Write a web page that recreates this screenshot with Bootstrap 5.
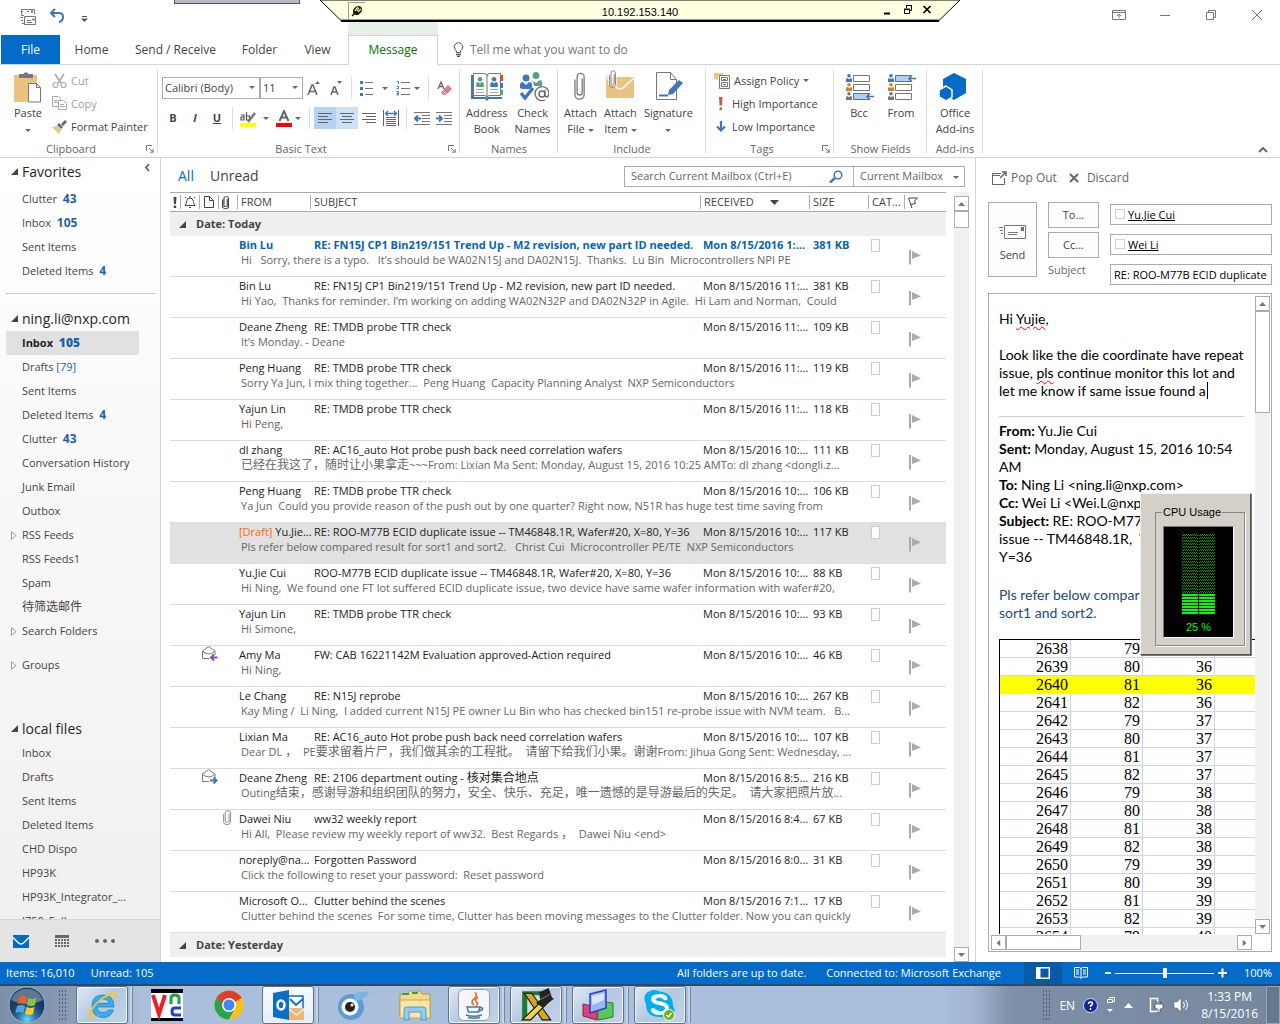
<!DOCTYPE html>
<html lang="en">
<head>
<meta charset="utf-8">
<meta name="viewport" content="width=device-width, initial-scale=1">
<title>Inbox - Outlook</title>
<link href="https://cdn.jsdelivr.net/npm/bootstrap@5.3.0/dist/css/bootstrap.min.css" rel="stylesheet">
<style>
body{font-family:"Open Sans","Noto Sans CJK SC",sans-serif;font-size:11px;line-height:16px;color:#444;height:100vh;min-height:760px;background:#fff}
button,input,select{font:inherit;color:inherit}
button{background:none;border:0;padding:0}
svg{display:block;flex:none}
a{color:inherit;text-decoration:none}
.crt{display:inline-block;width:0;height:0;border:3px solid transparent;border-top-color:#666;border-bottom:0;vertical-align:middle;flex:none}
.han{font-size:12px}
/* title bar */
.titlebar{height:35px}
.qat{gap:12px;padding:8px 0 0 20px}
.peek{left:174px;width:126px;height:4px;background:#b4bac6;border:1px solid #555;border-top:0}
.rdp{left:25%;width:50%;height:22px;z-index:5;color:#000;font-family:"Liberation Sans",sans-serif}
.rdp .side-cell{width:100px}
.ctxtab{left:348px;width:90px;top:20px;height:15px;background:#e8efe8}
.winbtns{gap:32px;padding:9px 16px 0 0}
/* tabs */
.tabsrow{height:30px;font-size:12px;border-bottom:1px solid #d4d4d4}
.tabsrow a{line-height:29px;text-align:center}
.t-file{width:59px;margin-left:1px;background:#046bc9;color:#fff}
.t-home{width:63px}.t-send{width:105px}.t-folder{width:63px}.t-view{width:53px}
.tabsrow .t-msg{width:90px;margin-left:4px;height:30px;border:1px solid #d4d4d4;border-bottom:0;background:#fff;color:#007000;line-height:27px}
.tell{color:#777;gap:6px;padding-left:15px}
/* ribbon */
.ribbon{height:93px;border-bottom:1px solid #d4d4d4}
.grp{position:relative;padding-top:4px}
.grp::after{content:"";position:absolute;right:0;top:4px;bottom:4px;width:1px;background:#dcdcdc}
.grp .cap{position:absolute;left:0;right:0;bottom:0;text-align:center;color:#666}
.launch{position:absolute;right:4px;bottom:4px}
.bigb{line-height:16px;text-align:center;display:flex;flex-direction:column;align-items:center}
.bigb svg{margin-bottom:2px}
.smallb{height:23px;display:flex;align-items:center;gap:4px;white-space:nowrap}
.g1{width:158px}.g2{width:302px}.g3{width:98px;padding-left:6px;gap:7px}.g4{width:148px;padding-left:6px;gap:7px}.g5{width:128px}.g6{width:93px}.g7{width:56px}
.dim{color:#a0a0a0}
.cell{width:22px;height:22px;display:flex;align-items:center;justify-content:center;flex:none}
.al1{background:#b5d3f0}.al2{background:#cde2f8}
.vsep{width:1px;height:22px;background:#dcdcdc;flex:none}
.pick{appearance:none;border:1px solid #ababab;border-radius:0;height:22px;width:100%;padding:0 2px;background:#fff}
.pickw{position:relative;flex:none}.pickw .crt{position:absolute;right:5px;top:9px;pointer-events:none}
.pk1{width:98px}.pk2{width:43px}
/* folders */
.side{width:161px;border-right:1px solid #d4d4d4;background:linear-gradient(#fff,#efefef)}
.flist{padding-top:2px;min-height:0}
.side h2{font-size:14px;line-height:24px;font-weight:400;margin:0;padding-left:22px;color:#262626;position:relative}
.side h2.top{margin-bottom:3px}
.side h2 svg,.fold svg{position:absolute;left:11px;top:8px}
.fold{display:block;height:24px;line-height:24px;padding-left:22px;position:relative;white-space:nowrap}
.fold b{color:#1e62ab;font-size:12px;margin-left:3px}.fold i{font-style:normal;color:#1e62ab}
.fold.on{background:#e1e1e1;margin:0 21px 0 6px;padding-left:16px;font-weight:700;color:#222}
.side hr{margin:10px 4px 13px 6px;opacity:1;border-color:#c8c8c8}
.sp1{height:10px}.sp2{height:40px}
.navbot{height:43px;background:#e4e4e4;border-top:1px solid #d4d4d4;gap:26px;padding-left:13px}
/* list */
.listp{padding:0 6px 0 9px}
.lhead{height:34px;padding-top:2px}
.big-t{font-size:14px}
.sbox{width:341px;height:21px;border:1px solid #ababab;color:#666}
.sbox input{border:0;outline:0;width:204px;padding:0 6px;background:none}
.sbox input::placeholder{color:#666;opacity:1}
.sbox select{appearance:none;border:0;border-left:1px solid #ababab;height:19px;width:111px;padding:0 6px;background:none}
.mail{width:100%;table-layout:fixed;border-collapse:separate;border-spacing:0}
.mail td,.mail th{padding:0;white-space:pre;overflow:hidden;vertical-align:top}
.mail thead th{height:20px;line-height:18px;font-weight:400;border-top:1px solid #ababab;border-bottom:1px solid #ababab}
.mail thead th>span{display:flex;align-items:center;height:14px;margin:2px 0;padding-left:3px;border-left:1px solid #ababab;line-height:14px}
.mail thead th:first-child>span{border:0}
.grph td{background:#efefef;height:24px;line-height:24px;font-weight:700}
.grph svg{display:inline-block;margin:0 10px 0 9px;vertical-align:0}
.m1 td{height:17px;line-height:17px;color:#222}
.mail .m1 td.f{padding-left:2px;overflow:visible}.m1 td.s{padding-left:4px}.m1 td.r{padding-left:3px}.m1 td.z{padding-left:4px}
.mail .m1 td.env{overflow:visible;padding-left:3px}.mail .m1 td.att{padding-left:5px}
.m2 td{height:24px;line-height:14px;color:#666;border-bottom:1px solid #dcdcdc;padding-left:4px}
.m1 td.ln{border-bottom:1px solid #dcdcdc}
.ln svg{margin:14px 0 0 5px}
.new .m1 td{color:#0564b4;font-weight:700}
.sel td{background:#e1e1e1}
.cbx{width:9px;height:13px;border:1px solid #ccc;margin:3px 0 0 3px;background:#fff}
.dr{color:#ff6a00}
.sbar{width:15px;background:#f1f1f1}
.sbtn{width:15px;height:15px;border:1px solid #ababab;background:#fff;display:flex;align-items:center;justify-content:center;flex:none}
.thumb{border:1px solid #ababab;background:#fff}
.th1{height:17px}.th2{height:102px}.th3{width:75px}
.dn{transform:rotate(180deg)}.lf{transform:rotate(-90deg)}.rt{transform:rotate(90deg)}
.minh{min-height:0}
/* compose */
.comp{width:305px;border-left:1px solid #d4d4d4;padding:10px 8px 10px 12px}
.cbar{height:20px;font-size:12px;color:#666}
.addr{height:83px;gap:11px;margin:14px 0 8px}
.fbtn{border:1px solid #ababab;background:#fdfdfd}
.fsend{width:49px;height:75px}
.fcol{width:51px;gap:4px}.fcol .fbtn{height:26px}.fcol label{color:#666}
.fflds{gap:9px;padding-top:2px;min-width:0}
.fld{height:21px;border:1px solid #ababab;color:#000;overflow:hidden}
.fld input{border:0;outline:0;padding:0 3px;width:100%;min-width:0;line-height:19px;background:none}
.nm input{text-decoration:underline}
.pres{width:10px;height:10px;border:1px solid #d0d0d0;margin:4px 0 0 4px;flex:none}
.msgbox{border:1px solid #ababab;color:#000;padding:2px 1px 1px 2px;min-height:0}
.doc{font-family:Lato,"Liberation Sans",sans-serif;font-size:14px;line-height:18px;padding:14px 0 0 8px;white-space:nowrap}
.doc p{margin:0}
.doc hr{margin:16px 11px 5px 0;opacity:1;border-color:#ccc}
.caretbar{border-left:1px solid #000;margin-left:1px}
.wavy{text-decoration:underline wavy #f00 1px;text-underline-offset:2px}
.doc .ink{color:#1f497d;margin:20px 0 17px}
.dat{table-layout:fixed;width:300px;border-collapse:separate;border-spacing:0;border-top:1px solid #000;border-left:1px solid #000;font-family:"Liberation Serif",serif;font-size:16px;line-height:17px}
.dat td{padding:0 2px 0 0;height:18px;text-align:right;border-right:1px solid #cdd7e2;border-bottom:1px solid #cdd7e2}
.dat .hl td{background:#ff0;border-color:#ff0}
.hbar{background:#f1f1f1;margin:1px 18px 0 0}
.cpu{right:29px;bottom:369px;width:111px;height:162px;z-index:6;background:#d4d0c8;border:1px solid;border-color:#f4f2ee #555 #555 #f4f2ee;box-shadow:1px 1px 0 #777;padding:18px 5px 8px 14px;font-family:"Liberation Sans",sans-serif;color:#000}
.cpu fieldset{border:1px solid #888;box-shadow:1px 1px 0 #fff;height:134px;position:relative;padding:13px 10px 8px 7px}
.cpu legend{position:absolute;top:-8px;left:6px;float:none;width:auto;font-size:11px;line-height:14px;background:#d4d0c8;padding:0 1px;margin:0;white-space:nowrap}
.scr{background:#000;height:112px;color:#0f0;text-align:center;border:1px solid;border-color:#777 #fff #fff #777;padding-top:7px}
.scr svg{margin:0 auto 5px}
/* status + taskbar */
.status{height:22px;background:#046bc9;color:#fff;line-height:22px;padding:0 8px 0 6px}
.conn{padding:0 23px 0 20px}
.vbtn{width:38px;height:22px;display:flex;align-items:center;justify-content:center}
.vbtn.on{background:#075ba8}
.task{height:40px;border-top:2px solid #3a4654;background:linear-gradient(90deg,#7d90a8 0,#8598b0 60px,#a9bfdc 140px,#a9bfdc 73%,#a2b6d1 76%,#7d90a8 79%,#75889f 100%)}
.slot{width:62px;height:38px;display:flex;align-items:center;padding-left:9px;position:relative}
.slot.run{background:linear-gradient(135deg,#dfe9f5,#b4c8e0 50%,#c2d3e8);border:1px solid #5d7189;border-radius:3px;box-shadow:inset 0 0 0 1px #ecf3fa}
.slot.stk{width:52px;margin-right:10px}
.slot.stk::after{content:"";position:absolute;left:100%;top:0;bottom:0;width:6px;border:solid #7488a1;border-width:0 1px 0 0;box-shadow:inset -2px 0 0 #c4d4e8}
.slot.act{background:linear-gradient(#f7fafd,#e3edf8)}
.grip{width:9px;height:32px;background-image:radial-gradient(#4c5d72 1px,transparent 1px);background-size:3px 4px}
.gstart{margin:0 9px 0 12px}
.tray{color:#fff;font-size:12px;line-height:17px}
.clock{margin:0 8px 0 11px;text-align:center}
.desk{width:14px;background:#66788e;border:1px solid #93a5ba}
</style>
<script src="https://cdn.jsdelivr.net/npm/bootstrap@5.3.0/dist/js/bootstrap.bundle.min.js"></script>
</head>
<body class="d-flex flex-column overflow-hidden position-relative m-0">
<svg width="0" height="0" class="position-absolute">
<symbol id="tri" viewBox="0 0 7 7"><path d="M7 0v7H0z" fill="#444"/></symbol>
<symbol id="tro" viewBox="0 0 6 9"><path d="M.5.8v7.4l4.600-3.700z" fill="#fff" stroke="#999"/></symbol>
<symbol id="lau" viewBox="0 0 8 8"><path d="M.5 6V.5H6M3 3l4 4M7.200 4v3.200H4" fill="none" stroke="#777"/></symbol>
<symbol id="clip" viewBox="0 0 10 26"><path d="M7.500 6v13a2.300 2.300 0 0 1-4.700 0V4.500a3.200 3.200 0 0 1 6.500 0V21a4.200 4.200 0 0 1-8.500 0V7" fill="none" stroke="#777" stroke-width="1.200"/></symbol>
<symbol id="pers" viewBox="0 0 6 8"><circle cx="3" cy="1.800" r="1.800"/><path d="M0 8V5.500Q0 4 1.500 4L3 5.200 4.500 4Q6 4 6 5.500V8z"/></symbol>
<symbol id="flag" viewBox="0 0 12 15"><path d="M1 0v14.500" stroke="#aaa" stroke-width="2"/><path d="M3 1l9 4.500L3 9z" fill="#aaa"/></symbol>
<symbol id="cu" viewBox="0 0 7 4"><path d="M0 4L3.500 0 7 4z" fill="#777"/></symbol>
</svg>

<header class="titlebar d-flex justify-content-between position-relative flex-shrink-0">
  <div class="qat d-flex align-items-start">
    <button aria-label="Send and receive"><svg width="17" height="17" viewBox="0 0 17 17" fill="none" stroke="#777"><path d="M4 7.500H1.500v-6h13V6M1 3.500h2M0 9.500h3M1 12.500h2M2 15.500h2M7 3.500h2"/><path d="M4.500 8.500h11v8h-11zM7 12.500h4M7 14.500h5"/><path d="M11 3.500h2M12.500 11.500h2" stroke="#2a6db5" stroke-width="2"/></svg></button>
    <button aria-label="Undo"><svg width="16" height="15" viewBox="0 0 16 15" fill="none" stroke="#3e78b8" stroke-width="2"><path d="M6 1L2 5l4 4M2.500 5H10q4 0 4 4 0 4-4 5"/></svg></button>
    <button aria-label="Customize" class="pt-1 ms-1 mt-1"><svg width="7" height="6" viewBox="0 0 7 6"><path d="M1 .5h5" stroke="#555"/><path d="M0 2.500h7L3.500 6z" fill="#555"/></svg></button>
  </div>
  <div class="peek position-absolute top-0"></div>
  <div class="ctxtab position-absolute"></div>
  <div class="rdp position-absolute top-0">
    <svg class="position-absolute w-100 h-100" viewBox="0 0 640 22" preserveAspectRatio="none"><path d="M0 0l21 20.500h598L640 0z" fill="#ffffe1" stroke="#000"/><path d="M21 19.500h598" stroke="#999"/><path d="M21 21h598" stroke="#000" stroke-width="2"/></svg>
    <div class="position-relative d-flex justify-content-between align-items-center">
      <button aria-label="Pin" class="side-cell ps-4"><svg class="ms-1" width="17" height="17" viewBox="0 0 17 17"><path d="M.5 17V.5H17" fill="none" stroke="#999"/><path d="M4 14l3-3" stroke="#111" stroke-width="1.500"/><ellipse cx="9.500" cy="8.500" rx="5" ry="4" transform="rotate(-45 9.500 8.500)" fill="#111"/><path d="M7 9l3-4M10 10l3-3" stroke="#ee3" stroke-width="1.500"/><path d="M9 9l2-3" stroke="#fff"/></svg></button>
      <span class="pt-1">10.192.153.140</span>
      <span class="side-cell d-flex align-items-center justify-content-end gap-2 pe-4">
        <svg width="12" height="12" viewBox="0 0 12 12"><path d="M2 9.500h6" stroke="#000" stroke-width="2"/></svg>
        <svg width="12" height="12" viewBox="0 0 12 12" fill="none" stroke="#000"><path d="M4.500 4V1.500h5v5H8M4 1.500h6M2.500 5.500h5v4h-5zM2 5h6"/></svg>
        <svg class="me-1" width="10" height="12" viewBox="0 0 10 12"><path d="M1.500 2l7 7M8.500 2l-7 7" stroke="#000" stroke-width="1.700"/></svg>
      </span>
    </div>
  </div>
  <div class="winbtns d-flex align-items-start">
    <button aria-label="Ribbon options"><svg width="14" height="12" viewBox="0 0 14 12" fill="none" stroke="#777"><path d="M.5 1.500h13v9H.5zM.5 3.500h13M7 9V5M5 7l2-2 2 2"/></svg></button>
    <button aria-label="Minimize"><svg width="14" height="12" viewBox="0 0 14 12"><path d="M2 6.500h10" stroke="#777"/></svg></button>
    <button aria-label="Restore"><svg width="14" height="12" viewBox="0 0 14 12" fill="none" stroke="#777"><path d="M2.500 3.500h7v7h-7zM4.500 3V1.500h7v7H10"/></svg></button>
    <button aria-label="Close"><svg width="14" height="12" viewBox="0 0 14 12"><path d="M2 1l10 10M12 1L2 11" stroke="#777"/></svg></button>
  </div>
</header>

<nav class="tabsrow d-flex flex-shrink-0">
  <a href="#" class="t-file">File</a><a href="#" class="t-home">Home</a><a href="#" class="t-send">Send / Receive</a><a href="#" class="t-folder">Folder</a><a href="#" class="t-view">View</a><a href="#" class="t-msg">Message</a>
  <label class="tell d-flex align-items-center"><svg width="11" height="15" viewBox="0 0 11 15" fill="none" stroke="#555"><path d="M3.500 10.500Q3.500 8.500 2 7.200A4.200 4.200 0 1 1 9 7.200Q7.500 8.500 7.500 10.500z"/><path d="M3 12.500h5M4 14.500h3" stroke-width="1.400"/></svg>Tell me what you want to do</label>
</nav>

<section class="ribbon d-flex flex-shrink-0 position-relative">
  <div class="grp g1 d-flex">
    <button class="bigb ps-2 pe-2 ms-1"><svg width="32" height="34" viewBox="0 0 32 34"><path d="M2 6h23v27H2z" fill="#eac282"/><path d="M7 9V5h4.500a2.700 2.700 0 0 1 5 0H21v4z" fill="#777"/><path d="M16.500 14.500h8l4 4V33h-12z" fill="#fff" stroke="#777"/><path d="M24.500 14.500v4h4" fill="none" stroke="#777"/></svg><span>Paste</span><i class="crt mt-2"></i></button>
    <div>
      <button class="smallb dim"><svg width="15" height="16" viewBox="0 0 15 16" fill="none" stroke="#aaa" stroke-width="1.600"><path d="M3 1l6 9M12 1L6 10"/><circle cx="3.500" cy="12" r="2.500" stroke-width="1.200"/><circle cx="11.500" cy="12" r="2.500" stroke-width="1.200"/></svg>Cut</button>
      <button class="smallb dim"><svg width="15" height="15" viewBox="0 0 15 15" fill="#fff" stroke="#aaa"><path d="M.5.5h6l2 2v8h-8zM2 4.500h4M2 6.500h4"/><path d="M6.500 4.500h5l3 3v6h-8zM8 8.500h4M8 10.500h5"/></svg>Copy</button>
      <button class="smallb"><svg width="15" height="15" viewBox="0 0 15 15"><path d="M0 8l5-1 4 4-2 4z" fill="#eac282"/><path d="M5 6l4 4 2-2-4-4zM9 5l4-4 2 2-4 4z" fill="#666"/></svg>Format Painter</button>
    </div>
    <div class="cap pe-3">Clipboard</div><svg class="launch" width="8" height="8"><use href="#lau"/></svg>
  </div>

  <div class="grp g2 ps-1">
    <div class="d-flex align-items-center pt-2">
      <div class="pickw pk1"><select class="pick" aria-label="Font"><option>Calibri (Body)</option></select><i class="crt"></i></div>
      <div class="pickw pk2"><select class="pick" aria-label="Font size"><option>11</option></select><i class="crt"></i></div>
      <button class="cell" aria-label="Grow font"><svg width="14" height="16" viewBox="0 0 14 16"><path d="M1 15L5 5h1l4 10M2.500 11.500h6" fill="none" stroke="#666" stroke-width="1.600"/><path d="M8 4h5l-2.500-3z" fill="#3e78b8"/></svg></button>
      <button class="cell" aria-label="Shrink font"><svg width="14" height="16" viewBox="0 0 14 16"><path d="M2 15l3-8h1l3 8M3 12h5" fill="none" stroke="#666" stroke-width="1.500"/><path d="M8 1h5l-2.500 3z" fill="#3e78b8"/></svg></button>
      <span class="vsep ms-1 me-1"></span>
      <button class="cell" aria-label="Bullets"><svg width="14" height="15" viewBox="0 0 14 15"><path d="M0 1.500h3M0 7.500h3M0 13.500h3" stroke="#3e78b8" stroke-width="3"/><path d="M5 1.500h8M5 7.500h8M5 13.500h8" stroke="#777"/></svg></button><i class="crt ms-1 me-1"></i>
      <button class="cell" aria-label="Numbering"><svg width="15" height="15" viewBox="0 0 15 15"><path d="M1 .5h1.500V3M.5 5.500h2v2h-2M.5 10.500h2v3.500h-2M.5 12.500h2" stroke="#3e78b8" fill="none"/><path d="M5 1.500h9M5 7.500h9M5 13.500h9" stroke="#777"/></svg></button><i class="crt me-2"></i>
      <span class="vsep me-1"></span>
      <button class="cell" aria-label="Clear formatting"><svg width="15" height="15" viewBox="0 0 15 15"><path d="M1 8l3-7 3 7M2 5.500h4" stroke="#666" fill="none" stroke-width="1.300"/><path d="M4 11l7-7 4 4-6 6H6z" fill="#e2788e"/><path d="M5 9l5 5" stroke="#fff"/></svg></button>
    </div>
    <div class="d-flex align-items-center mt-2">
      <button class="cell fw-bold">B</button><button class="cell fst-italic fw-bold">I</button><button class="cell fw-bold text-decoration-underline">U</button>
      <span class="vsep ms-1 me-1"></span>
      <button class="cell" aria-label="Highlight"><svg width="17" height="17" viewBox="0 0 17 17"><path d="M1 5h3v5H1V7h3M6.500 2v8h3V6h-3" fill="none" stroke="#555" stroke-width="1.200"/><path d="M8 12l7-9" stroke="#777" stroke-width="2.500"/><path d="M0 13h16v4H0z" fill="#ff0"/></svg></button><i class="crt ms-1 me-1"></i>
      <button class="cell" aria-label="Font color"><svg width="17" height="17" viewBox="0 0 17 17"><path d="M3.500 11L8 1l4.500 10M5 7.500h6" fill="none" stroke="#666" stroke-width="2"/><path d="M0 13h16v4H0z" fill="red"/></svg></button><i class="crt"></i>
      <span class="vsep ms-2 me-1"></span>
      <button class="cell al1" aria-label="Align left"><svg width="14" height="11" viewBox="0 0 14 11"><path d="M0 .5h14M0 3.500h10M0 6.500h14M0 9.500h10" stroke="#666"/></svg></button>
      <button class="cell al2" aria-label="Center"><svg width="14" height="11" viewBox="0 0 14 11"><path d="M0 .5h14M2 3.500h10M0 6.500h14M2 9.500h10" stroke="#666"/></svg></button>
      <button class="cell" aria-label="Align right"><svg width="14" height="11" viewBox="0 0 14 11"><path d="M0 .5h14M4 3.500h10M0 6.500h14M4 9.500h10" stroke="#666"/></svg></button>
      <button class="cell" aria-label="Justify"><svg width="16" height="16" viewBox="0 0 16 16"><path d="M.5 0v16M15.500 0v16M3 7.500h10M3 9.500h10M3 11.500h10M3 13.500h10M3 15.500h10" stroke="#666"/><path d="M2 3.500h12M5 1L2.500 3.500 5 6M11 1l2.500 2.500L11 6" stroke="#3e78b8" stroke-width="1.400" fill="none"/></svg></button>
      <span class="vsep ms-1 me-1"></span>
      <button class="cell" aria-label="Decrease indent"><svg width="16" height="13" viewBox="0 0 16 13"><path d="M0 .5h16M8 3.500h8M8 6.500h8M8 9.500h8M0 12.500h16" stroke="#777"/><path d="M1 6.500h6M4 3.500l-3 3 3 3" stroke="#3e78b8" stroke-width="2" fill="none"/></svg></button>
      <button class="cell" aria-label="Increase indent"><svg width="16" height="13" viewBox="0 0 16 13"><path d="M0 .5h16M8 3.500h8M8 6.500h8M8 9.500h8M0 12.500h16" stroke="#777"/><path d="M0 6.500h6M3 3.500l3 3-3 3" stroke="#3e78b8" stroke-width="2" fill="none"/></svg></button>
    </div>
    <div class="cap pe-3">Basic Text</div><svg class="launch" width="8" height="8"><use href="#lau"/></svg>
  </div>

  <div class="grp g3 d-flex">
    <button class="bigb"><svg width="32" height="34" viewBox="0 0 32 34"><path d="M0 6h3v22h12l1 1 1-1h14v2H18l-2 2-2-2H0z" fill="#3e78b8"/><path d="M2.500 4.500H13q3 0 3 2.500 0-2.500 3-2.500h10.500v22H19q-3 0-3 2-0-2-3-2H2.500zM16 7v20" fill="#fff" stroke="#777"/><path d="M29 6h3v6h-3z" fill="#d9532c"/><path d="M29 14h3v5h-3z" fill="#3e78b8"/><path d="M29 21h3v5h-3z" fill="#5a9f85"/><path d="M5 20.500h8M5 23.500h8M19 20.500h8M19 23.500h8" stroke="#aaa"/><use href="#pers" x="5" y="8" width="8" height="10" fill="#5a9f85"/><use href="#pers" x="19" y="8" width="8" height="10" fill="#3e78b8"/></svg>Address<br>Book</button>
    <button class="bigb"><svg width="32" height="34" viewBox="0 0 32 34"><circle cx="9" cy="9" r="3.500" fill="#3e78b8"/><path d="M3 19v-3q0-3 3-3l3 3 3-3q3 0 3 3v2l-2 2H5z" fill="#3e78b8"/><circle cx="19" cy="6.500" r="3.500" fill="#5a9f85"/><path d="M14 11l5 3 4-3q2 0 2 3v3h-8l-1-4z" fill="#5a9f85"/><path d="M4 24l4 5 8-10" fill="none" stroke="#3e78b8" stroke-width="3.500"/><circle cx="25" cy="25" r="3" fill="none" stroke="#666" stroke-width="1.400"/><path d="M28 21v5q0 2 2 2 2-1 2-4a7 7 0 1 0-4 7" fill="none" stroke="#666" stroke-width="1.300"/></svg>Check<br>Names</button>
    <div class="cap">Names</div>
  </div>

  <div class="grp g4 d-flex">
    <button class="bigb"><svg width="32" height="34" viewBox="0 0 32 34"><use href="#clip" x="10" y="3" width="11" height="28"/></svg>Attach<br><span>File <i class="crt"></i></span></button>
    <button class="bigb"><svg width="32" height="34" viewBox="0 0 32 34"><path d="M2 8h28v21H2z" fill="#eac282"/><path d="M3 9l9 9q4 4 8 0l10-9" fill="none" stroke="#fff" stroke-width="1.500"/><path d="M4 2h9v14H4z" fill="#fff" opacity=".6"/><use href="#clip" x="5" y="1" width="7" height="18"/></svg>Attach<br><span>Item <i class="crt"></i></span></button>
    <button class="bigb"><svg width="32" height="34" viewBox="0 0 32 34"><path d="M4.500 3.500h14l6 7v20h-20zM18.500 3.500v7h6" fill="#fff" stroke="#777"/><path d="M7 26.500h9" stroke="#3e78b8" stroke-width="2"/><path d="M16 26l1-5L27 11l4 3-10 11z" fill="#3e78b8"/></svg>Signature<i class="crt mt-2"></i></button>
    <div class="cap">Include</div>
  </div>

  <div class="grp g5 ps-2">
    <button class="smallb"><svg width="16" height="16" viewBox="0 0 16 16"><path d="M0 0h9v3H4v4L0 6z" fill="#eac282"/><path d="M5.500 2.500h10v13h-10zM7.500 4.500h6v3h-6zM7.500 9.500h6v4h-6zM9 6.500h3M9 11.500h3" fill="#fff" stroke="#777"/></svg>Assign Policy <i class="crt"></i></button>
    <button class="smallb"><svg width="14" height="14" viewBox="0 0 14 14"><path d="M5 0h3.500L8 8.500H5.500zM5.500 10.500H8V13H5.500z" fill="#d9532c"/></svg>High Importance</button>
    <button class="smallb"><svg width="14" height="14" viewBox="0 0 14 14"><path d="M7 1v10M3 6.500l4 4 4-4" stroke="#3e78b8" stroke-width="2.200" fill="none"/></svg>Low Importance</button>
    <div class="cap pe-3">Tags</div><svg class="launch" width="8" height="8"><use href="#lau"/></svg>
  </div>

  <div class="grp g6 d-flex ps-2 gap-2">
    <button class="bigb"><svg width="34" height="34" viewBox="0 0 34 34"><use href="#pers" x="4" y="5" width="6" height="8" fill="#3e78b8"/><use href="#pers" x="4" y="14" width="6" height="8" fill="#e07b20"/><use href="#pers" x="4" y="23" width="6" height="8" fill="#777"/><path d="M11.500 6.500h16v6h-16zM11.500 15.500h16v6h-16z" fill="#fff" stroke="#777"/><path d="M27 24.500H11.500v6H27" fill="#b9cce4" stroke="#3e78b8"/><path d="M25 27.500h7M28 24.500l-3 3 3 3" stroke="#3e78b8" stroke-width="1.600" fill="none"/></svg>Bcc</button>
    <button class="bigb"><svg width="34" height="34" viewBox="0 0 34 34"><use href="#pers" x="4" y="5" width="6" height="8" fill="#3e78b8"/><use href="#pers" x="4" y="14" width="6" height="8" fill="#e07b20"/><use href="#pers" x="4" y="23" width="6" height="8" fill="#777"/><path d="M11.500 24.500h16v6h-16zM11.500 15.500h16v6h-16z" fill="#fff" stroke="#777"/><path d="M27 6.500H11.500v6H27" fill="#b9cce4" stroke="#3e78b8"/><path d="M25 9.500h7M28 6.500l-3 3 3 3" stroke="#3e78b8" stroke-width="1.600" fill="none"/></svg>From</button>
    <div class="cap">Show Fields</div>
  </div>

  <div class="grp g7 d-flex justify-content-center">
    <button class="bigb"><svg width="32" height="34" viewBox="0 0 32 34"><path d="M15 4l12 6v14l-12 7L4 24V10z" fill="#046bc9"/><path d="M7 17l6 4v7l-6 4-7-4v-7z" fill="#046bc9" stroke="#fff" stroke-width="1.500"/></svg>Office<br>Add-ins</button>
    <div class="cap">Add-ins</div>
  </div>
  <button class="position-absolute bottom-0 end-0 pe-2 pb-1 me-1" aria-label="Collapse ribbon"><svg width="10" height="6" viewBox="0 0 10 6"><path d="M1 5l4-4 4 4" fill="none" stroke="#666" stroke-width="2"/></svg></button>
</section>

<main class="d-flex flex-grow-1 overflow-hidden minh">
  <aside class="side d-flex flex-column flex-shrink-0">
    <div class="flist flex-grow-1 overflow-hidden position-relative" id="folders"></div>
    <div class="navbot d-flex align-items-center flex-shrink-0">
      <button aria-label="Mail"><svg width="16" height="13" viewBox="0 0 16 13"><path d="M0 0h16v13H0z" fill="#046bc9"/><path d="M0 2.500l5 5q3 3 6 0l5-5" fill="none" stroke="#fff" stroke-width="1.400"/></svg></button>
      <button aria-label="Calendar"><svg width="14" height="13" viewBox="0 0 14 13"><path d="M0 1.500h14" stroke="#666" stroke-width="3"/><path d="M0 5h14M0 8h14M0 11h14" stroke="#666" stroke-width="2" stroke-dasharray="2 1"/></svg></button>
      <button aria-label="More"><svg width="20" height="4" viewBox="0 0 20 4" fill="#666"><circle cx="2" cy="2" r="2"/><circle cx="10" cy="2" r="2"/><circle cx="18" cy="2" r="2"/></svg></button>
    </div>
  </aside>

  <section class="listp flex-grow-1 d-flex flex-column overflow-hidden">
    <div class="lhead d-flex justify-content-between align-items-center flex-shrink-0 pe-1">
      <div class="big-t d-flex gap-3 ps-2"><a href="#" style="color:#046bc9">All</a><a href="#">Unread</a></div>
      <div class="sbox d-flex align-items-center position-relative">
        <input type="text" aria-label="Search" placeholder="Search Current Mailbox (Ctrl+E)">
        <svg class="me-2" width="14" height="13" viewBox="0 0 14 13"><circle cx="9" cy="5" r="3.800" fill="none" stroke="#3e78b8" stroke-width="1.500"/><path d="M6 8l-5 4.500" stroke="#3e78b8" stroke-width="2.500"/></svg>
        <div class="pickw ms-auto"><select aria-label="Scope"><option>Current Mailbox</option></select><i class="crt"></i></div>
      </div>
    </div>
    <div class="d-flex flex-grow-1 overflow-hidden gap-2 minh">
      <div class="flex-grow-1">
        <table class="mail">
          <colgroup><col style="width:10px"><col style="width:19px"><col style="width:19px"><col style="width:19px"><col style="width:73px"><col><col style="width:109px"><col style="width:59px"><col style="width:36px"><col style="width:42px"></colgroup>
          <thead><tr>
            <th><span><svg width="4" height="11" viewBox="0 0 4 11"><path d="M.5 0h3L3 7H1zM.7 8.500h2.500V11H.7z" fill="#444"/></svg></span></th>
            <th><span><svg width="12" height="12" viewBox="0 0 12 12" fill="none" stroke="#444"><path d="M1 9.500h10Q9.500 8 9.500 5.500 9 2 6 2T2.500 5.500Q2.500 8 1 9.500M5 11.500h2M1 1l1 1M11 1l-1 1M6 0v2"/></svg></span></th>
            <th><span class="ps-1"><svg width="10" height="12" viewBox="0 0 10 12" fill="none" stroke="#444"><path d="M.5.5h5l4 4v7h-9zM5.500.5v4h4"/></svg></span></th>
            <th><span><svg width="7" height="13" viewBox="0 0 10 26" preserveAspectRatio="none"><path d="M7.500 6v13a2.300 2.300 0 0 1-4.700 0V4.500a3.200 3.200 0 0 1 6.500 0V21a4.200 4.200 0 0 1-8.500 0V7" fill="none" stroke="#444" stroke-width="1.600"/></svg></span></th>
            <th><span>FROM</span></th><th><span>SUBJECT</span></th>
            <th><span>RECEIVED<svg class="ms-3" width="9" height="5" viewBox="0 0 9 5"><path d="M0 0h9L4.500 5z" fill="#444"/></svg></span></th>
            <th><span>SIZE</span></th><th><span>CAT...</span></th>
            <th><span><svg width="10" height="11" viewBox="0 0 10 11" fill="none" stroke="#444"><path d="M.5 1L4 11M1 1h8.500L6.500 4l1 2.500-5 1"/></svg></span></th>
          </tr></thead>
        </table>
      </div>
      <div class="sbar d-flex flex-column flex-shrink-0 pt-0 mt-0">
        <span class="sbtn mt-1"><svg width="7" height="4"><use href="#cu"/></svg></span>
        <span class="thumb th1"></span>
        <span class="sbtn mt-auto"><svg class="dn" width="7" height="4"><use href="#cu"/></svg></span>
      </div>
    </div>
  </section>

  <section class="comp d-flex flex-column flex-shrink-0">
    <div class="cbar d-flex align-items-center flex-shrink-0 ps-1">
      <button class="d-flex align-items-center gap-1"><svg width="15" height="14" viewBox="0 0 15 14" fill="none" stroke="#666"><path d="M9 2.500H.5v11h12V7M.5 4.500H8" /><path d="M8 7l5.500-5.500M10 1h4v4" stroke-width="1.500"/></svg>Pop Out</button>
      <button class="d-flex align-items-center gap-2 ps-1 ms-2"><svg width="10" height="10" viewBox="0 0 10 10"><path d="M1 1l8 8M9 1L1 9" stroke="#666" stroke-width="2"/></svg>Discard</button>
    </div>
    <div class="addr d-flex flex-shrink-0">
      <button class="fbtn fsend d-flex flex-column align-items-center justify-content-center gap-2"><svg class="mt-2" width="27" height="14" viewBox="0 0 27 14"><path d="M5.500.5h21v13h-21z" fill="#fff" stroke="#777"/><path d="M0 2.500h4M1 5.500h3M2 8.500h2M9 7.500h10M9 9.500h9" stroke="#777"/><path d="M22 2h3v4h-3z" fill="#3e78b8"/></svg>Send</button>
      <div class="fcol d-flex flex-column">
        <button class="fbtn">To...</button><button class="fbtn">Cc...</button><label for="sub">Subject</label>
      </div>
      <div class="fflds d-flex flex-column flex-grow-1">
        <div class="fld nm d-flex"><i class="pres"></i><input aria-label="To" value="Yu.Jie Cui"></div>
        <div class="fld nm d-flex"><i class="pres"></i><input aria-label="Cc" value="Wei Li"></div>
        <div class="fld"><input id="sub" value="RE: ROO-M77B ECID duplicate"></div>
      </div>
    </div>
    <div class="msgbox flex-grow-1 d-flex flex-column">
      <div class="d-flex flex-grow-1 overflow-hidden minh">
        <div class="doc flex-grow-1 overflow-hidden">
          <p>Hi <span class="wavy">Yujie</span>,</p><p>&nbsp;</p>
          <p>Look like the die coordinate have repeat<br>issue, <span class="wavy">pls</span> continue monitor this lot and<br>let me know if same issue found a<span class="caretbar"></span></p>
          <hr>
          <p><b>From:</b> Yu.Jie Cui<br><b>Sent:</b> Monday, August 15, 2016 10:54<br>AM<br><b>To:</b> Ning Li &lt;ning.li@nxp.com&gt;<br><b>Cc:</b> Wei Li &lt;Wei.L@nxp<br><b>Subject:</b> RE: ROO-M77B<br>issue -- TM46848.1R, &nbsp;W<br>Y=36</p>
          <p class="ink">Pls refer below compar<br>sort1 and sort2.</p>
          <table class="dat"><colgroup><col style="width:71px"><col style="width:72px"><col style="width:72px"><col></colgroup><tbody id="dat"></tbody></table>
        </div>
        <div class="sbar d-flex flex-column flex-shrink-0">
          <span class="sbtn"><svg width="7" height="4"><use href="#cu"/></svg></span><span class="thumb th2"></span>
          <span class="sbtn mt-auto"><svg class="dn" width="7" height="4"><use href="#cu"/></svg></span>
        </div>
      </div>
      <div class="hbar d-flex flex-shrink-0">
        <span class="sbtn"><svg class="lf" width="7" height="4"><use href="#cu"/></svg></span><span class="thumb th3"></span>
        <span class="sbtn ms-auto"><svg class="rt" width="7" height="4"><use href="#cu"/></svg></span>
      </div>
    </div>
  </section>
</main>

<footer class="status d-flex flex-shrink-0 align-items-center">
  <span>Items: 16,010</span><span class="ps-3">Unread: 105</span>
  <span class="ms-auto">All folders are up to date.</span><span class="conn">Connected to: Microsoft Exchange</span>
  <button class="vbtn on" aria-label="Normal"><svg width="14" height="12" viewBox="0 0 14 12"><path d="M.7.7h12.600v10.600H.7z" fill="none" stroke="#fff" stroke-width="1.500"/><path d="M1 1h3.500v10H1z" fill="#fff"/></svg></button>
  <button class="vbtn" aria-label="Reading"><svg width="14" height="12" viewBox="0 0 14 12"><path d="M.5.500h5l1.500 1 1.500-1h5v9.500h-5L7 11.500 5.500 10h-5zM7 1v10M2 3h3M2 5h3M2 7h3M9 3h3M9 5h3M9 7h3" fill="none" stroke="#fff"/></svg></button>
  <svg width="124" height="12" viewBox="0 0 124 12" class="ms-1 me-3"><path d="M1 6h6M114 6h9M118.500 1.500v9" stroke="#fff" stroke-width="2"/><path d="M11 6.500h99" stroke="#fff"/><path d="M59 1h4v10h-4z" fill="#fff"/></svg>
  <span>100%</span>
</footer>

<footer class="task d-flex align-items-center flex-shrink-0">
  <button class="ms-2" aria-label="Start"><svg width="38" height="38" viewBox="0 0 38 38"><defs><radialGradient id="orb" cy=".9"><stop offset="0" stop-color="#5fe0ff"/><stop offset=".5" stop-color="#2b74a8"/><stop offset="1" stop-color="#1a3d62"/></radialGradient></defs><circle cx="19" cy="19" r="18" fill="url(#orb)" stroke="#9fb6cc"/><path d="M3 14a17 17 0 0 1 32 0q-16 8-32 0z" fill="#fff" opacity=".3"/><path d="M11 11q4-2 8 0l-1.500 7q-4-2-8 0z" fill="#e8602c"/><path d="M20.500 12q4 2 8 0L27 19q-4 2-8 0z" fill="#8cc63f"/><path d="M9 20q4-2 8 0l-1.500 7q-4-2-8 0z" fill="#4ea5e0"/><path d="M18.500 21q4 2 8 0L25 28q-4 2-8 0z" fill="#fdc72f"/></svg></button>
  <span class="grip gstart"></span>
  <a href="#" class="slot run stk" title="Internet Explorer"><svg width="32" height="32" viewBox="0 0 32 32"><path d="M28 18H11q.5 5.500 6 5.500 4 0 5.500-2.500h5Q24.500 28.500 17 28.500 6 28 6 17T17 6q11 0 11 12zM11.500 14.500H23Q22.500 10 17 10t-5.500 4.500z" fill="#3aaee8" stroke="#1d78b8" stroke-width=".7"/><path d="M3 29q-4-5 9-17Q24 1 30 4q2 3-1 8 1-6-4-5.500Q19 7 11 15 3 24 6 27q3 1.500 8-2-7 6-11 4z" fill="#f6c636"/></svg></a>
  <a href="#" class="slot" title="VNC"><svg class="ms-1" width="32" height="32" viewBox="0 0 32 32"><path d="M0 0h32v32H0z" fill="#fff"/><path d="M0 0h32v4H0zM0 29h32v3H0z" fill="#000"/><path d="M2 6l6 19 6-19" fill="none" stroke="#e8202a" stroke-width="4"/><path d="M20 15V9q0-3 4-3t4 3v6" fill="none" stroke="#1aa048" stroke-width="3"/><path d="M30 19h-6q-3 0-3 3.500t3 3.500h6" fill="none" stroke="#2440c8" stroke-width="3"/></svg></a>
  <a href="#" class="slot" title="Chrome"><svg class="ms-1" width="32" height="32" viewBox="0 0 32 32"><circle cx="16" cy="16" r="14.500" fill="#fbc116"/><path d="M16 16L3.500 8.700A14.500 14.500 0 0 1 28.600 9z" fill="#e33b2e"/><path d="M3.500 8.700A14.500 14.500 0 0 0 16 30.500L22 19 16 16z" fill="#2ba24c"/><path d="M16 9h12.600l-1-2L4.500 7l5.500 10z" fill="#e33b2e"/><circle cx="16" cy="16" r="7" fill="#fff"/><circle cx="16" cy="16" r="5.500" fill="#4285f4"/></svg></a>
  <a href="#" class="slot run stk act" title="Outlook"><svg width="32" height="32" viewBox="0 0 32 32"><path d="M14 7h17v18H14z" fill="#fff" stroke="#0a6dc6" stroke-width="1.500"/><path d="M18 10l6 6 7-6" fill="none" stroke="#0a6dc6" stroke-width="2"/><path d="M1 4l16-3v30L1 28z" fill="#0a6dc6"/><ellipse cx="9" cy="16" rx="3.500" ry="4.500" fill="none" stroke="#fff" stroke-width="2.500"/><path d="M17 19h15v12H17z" fill="#efb678"/><path d="M17 20l7.500 6 7.500-6" fill="none" stroke="#fff" stroke-width="1.300"/></svg></a>
  <a href="#" class="slot" title="Browser"><svg class="ms-1" width="34" height="32" viewBox="0 0 34 32"><circle cx="14" cy="18" r="13" fill="#5c9bd6"/><path d="M17 9q0-7 8-6l7-1q0 6-8 8l-4 3z" fill="#7ab5e6"/><circle cx="13" cy="18" r="8.500" fill="#fff"/><circle cx="13" cy="18" r="5" fill="#222"/><circle cx="15" cy="16" r="1.500" fill="#fff"/></svg></a>
  <a href="#" class="slot" title="Explorer"><svg class="ms-1" width="32" height="32" viewBox="0 0 32 32"><path d="M1 5h8l2-3h10l2 3h8v23H1z" fill="#f3d98a" stroke="#b9953f"/><path d="M3 5h7M13 4h6" stroke="#3a9a4a" stroke-width="2"/><path d="M1 11h30v18H1z" fill="#f9e6a5" stroke="#c9a850"/><path d="M5 31V21q0-3 3-3h16q3 0 3 3v10h-5v-8H10v8z" fill="#8ccdf0" stroke="#5498c8"/></svg></a>
  <a href="#" class="slot run stk" title="Java"><svg width="32" height="32" viewBox="0 0 32 32"><rect x=".5" y=".5" width="31" height="31" rx="5" fill="#f4f6f8" stroke="#99a"/><path d="M17 3q3 4-1 7t0 6M20 8q-4 3-1.500 5t-.5 4" fill="none" stroke="#e6752a" stroke-width="1.700"/><path d="M9 18h13l-1.500 5h-10zM22 18.500q4 0 2 2.500l-3 1M8 26q8 2.500 16 0M10 28.500q6 1.500 12 0" fill="none" stroke="#4a7a98" stroke-width="1.500"/></svg></a>
  <a href="#" class="slot run stk" title="X server"><svg width="34" height="34" viewBox="0 0 32 32"><path d="M2 3h26v4H7v22H2z" fill="#1d7a36"/><path d="M7 7h13v20H7z" fill="#cfe0d2"/><path d="M4 5h7l18 25h-8z" fill="#d9a71c" stroke="#111"/><path d="M24 9l4 3L10 30H2z" fill="#f0cf52" stroke="#111"/><path d="M18 4l9-4 3 9 2 1-11 8-6-4 4-3z" fill="#222"/><path d="M19 11l9-5" stroke="#777"/></svg></a>
  <a href="#" class="slot run stk" title="Sessions"><svg width="32" height="32" viewBox="0 0 32 32"><path d="M16 12l15 2v14l-15 3z" fill="#5ac85a" stroke="#2a7a2a"/><path d="M1 15l14 3v13L1 27z" fill="#e0407a" stroke="#8a1c44"/><path d="M8 5l16-4v18L8 24z" fill="#9ab4f5" stroke="#2c3cc0" stroke-width="1.500"/><path d="M10 7l12-3v7l-12 5z" fill="#dbe4fd"/></svg></a>
  <a href="#" class="slot run stk" title="Skype"><svg width="32" height="32" viewBox="0 0 32 32"><path d="M10 1q4 0 6 1.500Q29 4 29 17q4 7-2 11-4 3-9 0Q2 29 2 15-2 7 4 3q3-2 6-2z" fill="#00aff0"/><path d="M16 5Q6 5 7 11q1 4 8 5t6 4q-2 3-6 2t-5-3q-4 0-3 3 2 4 9 4 9-1 9-7 0-5-8-6.500T12 10q1-2 4-1.500t4 2.500q4 1 3.500-2Q22 5 16 5z" fill="#fff"/><circle cx="25" cy="26" r="5.500" fill="#6fb31c" stroke="#fff"/><path d="M22.500 26l2 2 3-4" fill="none" stroke="#fff" stroke-width="1.300"/></svg></a>
  <div class="tray d-flex align-items-center ms-auto h-100">
    <span class="grip me-2"></span><span>EN</span>
    <svg class="ms-2" width="15" height="15" viewBox="0 0 15 15"><circle cx="7.500" cy="7.500" r="7" fill="#1523a8" stroke="#cdd"/><path d="M5.500 6q0-2 2-2t2 1.700q0 1-1.900 2V9M7.500 10v2" fill="none" stroke="#fff" stroke-width="1.500"/></svg>
    <svg class="ms-2" width="10" height="18" viewBox="0 0 10 18"><path d="M3.500 3V1.500h5v4H7M1.500 3.500h5v3h-5z" fill="none" stroke="#fff"/><path d="M1 13h6l-3 3z" fill="#fff"/></svg>
    <svg class="ms-2" width="9" height="5" viewBox="0 0 9 5"><path d="M0 5l4.500-5L9 5z" fill="#fff"/></svg>
    <svg class="ms-3" width="16" height="18" viewBox="0 0 16 18"><path d="M1.500 2.500h7v13h-7z" fill="none" stroke="#fff" stroke-width="1.500"/><path d="M8 5v3M12 5v3M6 8h8v3q0 2-2 2h-1v4H9v-4Q6 13 6 11z" fill="#fff" stroke="#444" stroke-width=".7"/></svg>
    <svg class="ms-2" width="17" height="16" viewBox="0 0 17 16"><path d="M1 5h3l4-4v14l-4-4H1z" fill="#fff" stroke="#555" stroke-width=".5"/><path d="M10.500 5q2 3 0 6M12.500 3q4 5 0 10" fill="none" stroke="#fff"/></svg>
    <span class="clock">1:33 PM<br>8/15/2016</span>
    <span class="desk h-100"></span>
  </div>
</footer>

<div class="cpu position-absolute"><fieldset><legend>CPU Usage</legend><div class="scr"><svg id="bars" width="33" height="80" viewBox="0 0 33 80"></svg>25 %</div></fieldset></div>

<script>
const tri='<svg width="7" height="7"><use href="#tri"/></svg>', tro='<svg width="6" height="9"><use href="#tro"/></svg>';
const esc=s=>s.replace(/</g,'&lt;').replace(/[\u3000-\u9fff\uff00-\uffef]+/g,'<span class="han">$&</span>');
const row=t=>`<a href="#" class="fold${t[0]=='*'?' on':''}">${t[0]=='>'?tro:''}${t.replace(/^[*>]/,'')}</a>`;
document.getElementById('folders').innerHTML=
 `<h2 class="top">${tri}Favorites</h2>`+['Clutter <b>43</b>','Inbox <b>105</b>','Sent Items','Deleted Items <b>4</b>'].map(row).join('')+
 `<hr><h2>${tri}ning.li@nxp.com</h2>`+['*Inbox <b>105</b>','Drafts <i>[79]</i>','Sent Items','Deleted Items <b>4</b>','Clutter <b>43</b>','Conversation History','Junk Email','Outbox','>RSS Feeds','RSS Feeds1','Spam','<span class="han">待筛选邮件</span>','>Search Folders'].map(row).join('')+
 `<div class="sp1"></div>${row('>Groups')}<div class="sp2"></div><h2>${tri}local files</h2>`+['Inbox','Drafts','Sent Items','Deleted Items','CHD Dispo','HP93K','HP93K_Integrator_...','J750_Full'].map(row).join('')+
 `<button class="position-absolute top-0 end-0 me-2 mt-1" aria-label="Collapse"><svg width="8" height="10" viewBox="0 0 8 10"><path d="M5 2L2 5.500 5 9" fill="none" stroke="#666" stroke-width="1.800"/></svg></button>`;
const mails=[
['Bin Lu','RE: FN15J CP1 Bin219/151 Trend Up - M2 revision, new part ID needed.','1:...','381','Hi   Sorry, there is a typo.   It’s should be WA02N15J and DA02N15J.  Thanks.  Lu Bin  Microcontrollers NPI PE','new'],
['Bin Lu','RE: FN15J CP1 Bin219/151 Trend Up - M2 revision, new part ID needed.','11:...','381','Hi Yao,  Thanks for reminder. I’m working on adding WA02N32P and DA02N32P in Agile.  Hi Lam and Norman,  Could'],
['Deane Zheng','RE: TMDB probe TTR check','11:...','109','It’s Monday. - Deane'],
['Peng Huang','RE: TMDB probe TTR check','11:...','119','Sorry Ya Jun, I mix thing together...  Peng Huang  Capacity Planning Analyst  NXP Semiconductors'],
['Yajun Lin','RE: TMDB probe TTR check','11:...','118','Hi Peng,'],
['dl zhang','RE: AC16_auto Hot probe push back need correlation wafers','10:...','111','已经在我这了，随时让小果拿走~~~From: Lixian Ma Sent: Monday, August 15, 2016 10:25 AMTo: dl zhang <dongli.z...'],
['Peng Huang','RE: TMDB probe TTR check','10:...','106','Ya Jun  Could you provide reason of the push out by one quarter? Right now, N51R has huge test time saving from'],
['[Draft] Yu.Jie...','RE: ROO-M77B ECID duplicate issue -- TM46848.1R, Wafer#20, X=80, Y=36','10:...','117','Pls refer below compared result for sort1 and sort2.   Christ Cui  Microcontroller PE/TE  NXP Semiconductors','sel'],
['Yu.Jie Cui','ROO-M77B ECID duplicate issue -- TM46848.1R, Wafer#20, X=80, Y=36','10:...','88','Hi Ning,  We found one FT lot suffered ECID duplicate issue, two device have same wafer information with wafer#20,'],
['Yajun Lin','RE: TMDB probe TTR check','10:...','93','Hi Simone,'],
['Amy Ma','FW: CAB 16221142M Evaluation approved-Action required','10:...','46','Hi Ning,','','re'],
['Le Chang','RE: N15J reprobe','10:...','267','Kay Ming /  Li Ning,  I added current N15J PE owner Lu Bin who has checked bin151 re-probe issue with NVM team.   B...'],
['Lixian Ma','RE: AC16_auto Hot probe push back need correlation wafers','10:...','107','Dear DL ，  PE要求留着片尸，我们做其余的工程批。  请留下给我们小果。谢谢From: Jihua Gong Sent: Wednesday, ...'],
['Deane Zheng','RE: 2106 department outing - 核对集合地点','8:5...','216','Outing结束，感谢导游和组织团队的努力，安全、快乐、充足，唯一遗憾的是导游最后的失足。  请大家把照片放...','','fw'],
['Dawei Niu','ww32 weekly report','8:4...','67','Hi All,  Please review my weekly report of ww32.  Best Regards ，  Dawei Niu <end>','','at'],
['noreply@na...','Forgotten Password','8:0...','31','Click the following to reset your password:  Reset password'],
['Microsoft O...','Clutter behind the scenes','7:1...','17','Clutter behind the scenes  For some time, Clutter has been moving messages to the Clutter folder. Now you can quickly']];
const env=(c,d)=>`<svg width="16" height="15" viewBox="0 0 16 15" fill="none" stroke="#777"><path d="M.5 12.500V5L6.500.700 13 5v4M.500 12.500H7M1 5.500q6 5 11.500 0"/><path d="${d}" stroke="${c}" stroke-width="2"/></svg>`;
const ic={re:env('#8550a8','M9 11.500h6.500M12 8.500l-3 3 3 3'),fw:env('#3e78b8','M8 11.500h6.500M11.500 8.500l3 3-3 3')};
const grp=t=>`<tbody><tr class="grph"><td colspan="10">${tri}${t}</td></tr></tbody>`;
let h=grp('Date: Today');
for(const [f,s,t,z,p,c,i] of mails)h+=`<tbody class="${c||''}"><tr class="m1"><td></td><td></td><td class="env">${ic[i]||''}</td><td class="att">${i=='at'?'<svg width="8" height="15" viewBox="0 0 10 26" preserveAspectRatio="none"><use href="#clip"/></svg>':''}</td><td class="f">${f.replace('[Draft]','<span class="dr">[Draft]</span>')}</td><td class="s">${esc(s)}</td><td class="r">Mon 8/15/2016 ${t}</td><td class="z">${z} KB</td><td><div class="cbx"></div></td><td class="ln" rowspan="2"><svg width="12" height="15"><use href="#flag"/></svg></td></tr><tr class="m2"><td colspan="4"></td><td colspan="4">${esc(p)}</td><td></td></tr></tbody>`;
document.querySelector('.mail').insertAdjacentHTML('beforeend',h+grp('Date: Yesterday'));
let d='';
for(let n=2638;n<2656;n++){const k=n-2638;d+=`<tr${n==2640?' class="hl"':''}><td>${n}</td><td>${79+k%4}</td><td>${36+(k>>2)}</td><td></td></tr>`}
document.getElementById('dat').innerHTML=d;
let b='<defs><pattern id="dot" width="2" height="3" patternUnits="userSpaceOnUse"><path d="M0 0h1v1H0zM1 1h1v1H1z" fill="#0a9a0a"/></pattern></defs><path d="M0 0h16v60H0zM17 0h16v60H17z" fill="url(#dot)"/>';
for(let y=60;y<80;y+=3)b+=`<path d="M0 ${y}h16v2H0zM17 ${y}h16v2H17z" fill="#0f0"/>`;
document.getElementById('bars').innerHTML=b;
</script>
</body>
</html>
